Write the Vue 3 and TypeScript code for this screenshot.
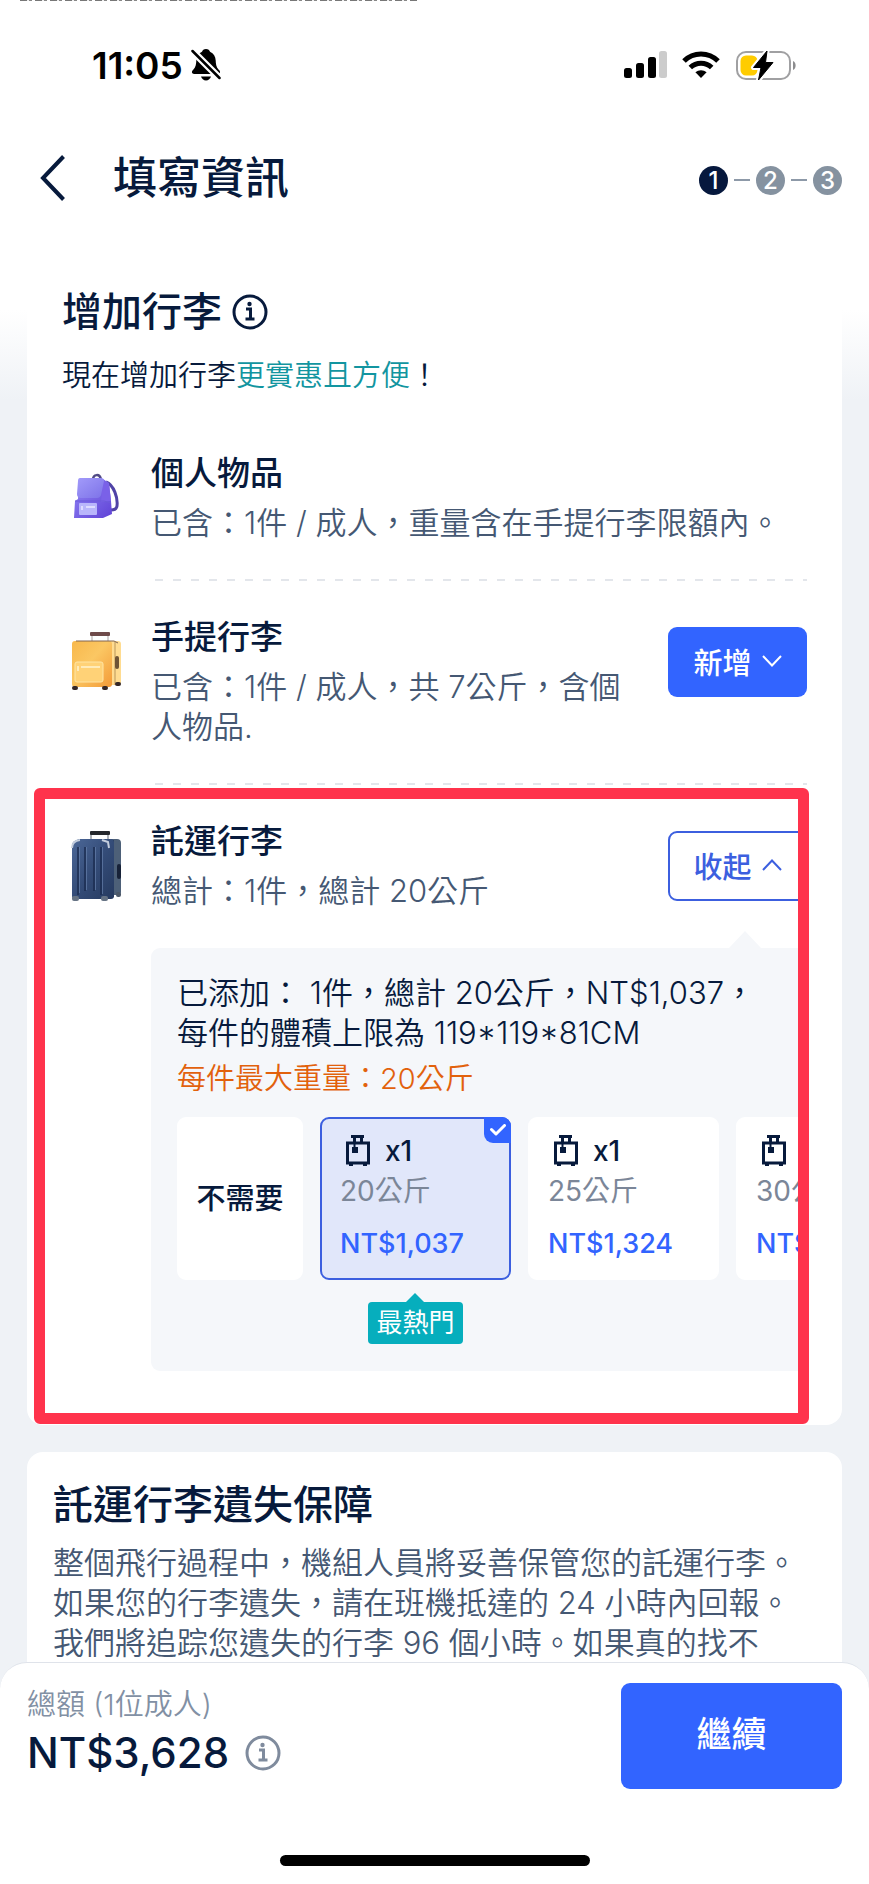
<script setup lang="ts">
import { ref } from 'vue'

interface Option {
  id: string
  weight?: string
  price?: string
  popular?: boolean
}

const options: Option[] = [
  { id: 'none' },
  { id: 'kg20', weight: '20公斤', price: 'NT$1,037', popular: true },
  { id: 'kg25', weight: '25公斤', price: 'NT$1,324' },
  { id: 'kg30', weight: '30公斤', price: 'NT$1,610' },
]

const selected = ref('kg20')
const steps = [1, 2, 3]
</script>

<template>
  <div class="page" lang="zh-Hant">
    <div class="caption-edge" aria-hidden="true"></div>
    <div class="status">
      <div class="status-left">
        <span class="time">11:05</span>
        <svg width="30" height="34" viewBox="0 0 30 34" aria-hidden="true">
          <path d="M15 1c-2.200 0-3.600 1.200-4 2.700C7.300 5.200 5.500 8.500 5.300 12.500 5.100 18 4 20 1.700 22.300c-1.500 1.700-.6 3.700 1.300 3.700h24c1.900 0 2.800-2 1.300-3.700C26 20 24.900 18 24.700 12.500 24.500 8.500 22.700 5.200 19 3.700 18.600 2.200 17.200 1 15 1Z" />
          <path d="M10 28.500h10c-.6 2.300-2.600 4-5 4s-4.400-1.700-5-4Z" />
          <path d="M1.500 3l27 27" stroke="#fff" stroke-width="7" />
          <path d="M1.500 3l27 27" stroke="#000" stroke-width="2.500" stroke-linecap="round" />
        </svg>
      </div>
      <div class="status-right">
        <svg width="43" height="28" viewBox="0 0 43 28" aria-hidden="true">
          <rect x="0" y="17" width="8" height="10" rx="2.500" />
          <rect x="12" y="12" width="8" height="15" rx="2.500" />
          <rect x="24" y="6" width="8" height="21" rx="2.500" />
          <rect x="35" y="0" width="8" height="27" rx="2.500" fill="#ccc" />
        </svg>
        <svg width="38" height="28" viewBox="0 0 38 28" aria-hidden="true">
          <g fill="none" stroke="#000" stroke-width="5">
            <path d="M2 10C11.500 .6 26.500 .6 36 10" />
            <path d="M8.300 16.500c6-5.800 15.400-5.800 21.400 0" />
          </g>
          <path d="M13.400 21.300c3.200-2.900 8-2.900 11.200 0L19 27Z" />
        </svg>
        <svg width="62" height="32" viewBox="0 0 62 32" aria-hidden="true">
          <rect x="2" y="3" width="53" height="27" rx="9" fill="none" stroke="#a0a0a2" stroke-width="2" />
          <path d="M58 12c3.500 1 3.500 8 0 9Z" fill="#8c8c8e" />
          <rect x="5.500" y="6.500" width="17" height="20" rx="5.500" fill="#ffcc00" />
          <path d="M32 2 18.500 18.500h7.500L23.500 31 38 13.500h-7.500Z" stroke="#fff" stroke-width="5" stroke-linejoin="round" />
          <path d="M32 2 18.500 18.500h7.500L23.500 31 38 13.500h-7.500Z" stroke="#000" stroke-linejoin="round" />
        </svg>
      </div>
    </div>

    <header class="header">
      <button class="back" type="button" aria-label="返回">
        <svg width="26" height="46" viewBox="0 0 26 46"><path d="M23.500 1.500 3 23l20.500 21.500" fill="none" stroke="#071a3c" stroke-width="4" /></svg>
      </button>
      <h1>填寫資訊</h1>
      <ol class="steps">
        <li v-for="s in steps" :key="s" :class="{ current: s === 1 }"><span>{{ s }}</span></li>
      </ol>
    </header>

    <main class="content">
      <section class="card baggage">
        <div class="heading">
          <h2>增加行李</h2>
          <button class="info" type="button" aria-label="行李說明">
            <svg width="36" height="36" viewBox="0 0 36 36" fill="none" stroke="currentColor" stroke-width="3">
              <circle cx="18" cy="18" r="16" />
              <path d="M14 15h4.500v9.500M13.500 25h9" />
              <circle cx="17.500" cy="10" r="2.200" fill="currentColor" stroke="none" />
            </svg>
          </button>
        </div>
        <p class="lead">現在增加行李<span>更實惠且方便</span>！</p>

        <div class="item">
          <svg class="pic" viewBox="0 0 72 90" aria-hidden="true">
            <defs>
              <linearGradient id="bagFlap" x1="0" y1="0" x2="1" y2="1"><stop stop-color="#a29bfa" /><stop offset="1" stop-color="#7d72e8" /></linearGradient>
              <linearGradient id="bagBody" x1="0" y1="0" x2="1" y2="1"><stop stop-color="#9187f6" /><stop offset="1" stop-color="#6042d6" /></linearGradient>
            </defs>
            <path d="M31 30c0-6 7-7 8 0" fill="none" stroke="#514a85" stroke-width="2.500" />
            <path d="M44 32c8 3 12 16 11 24-.5 4-4 4-6 4" fill="none" stroke="#5043a6" stroke-width="3" />
            <path d="M17 29h24l6 4 2 18 1 13-9 4H12l1-17 3-2Z" fill="url(#bagBody)" />
            <path d="m41 30 6 4 2 17-10 1Z" fill="#7a61e8" />
            <path d="M18 28h21q3 0 3 3l-3 14q-1 3-4 3H19q-4 0-4-4l1-13q0-3 2-3Z" fill="url(#bagFlap)" />
            <path d="M13 51h29l7 2" fill="none" stroke="#6c5ad9" />
            <rect x="17" y="53" width="18" height="12" rx="1" fill="#b9b6fb" />
            <path d="M20 56v4M24 57h9" stroke="#dedcff" stroke-width="2" />
          </svg>
          <div class="text">
            <h3>個人物品</h3>
            <p>已含：1件 / 成人，重量含在手提行李限額內。</p>
          </div>
        </div>

        <div class="item">
          <svg class="pic" viewBox="0 0 72 90" aria-hidden="true">
            <defs>
              <linearGradient id="carry" x1="0" y1="0" x2="1" y2="1"><stop stop-color="#f8b84c" /><stop offset=".45" stop-color="#fbc763" /><stop offset="1" stop-color="#f39a38" /></linearGradient>
            </defs>
            <path d="M30 21v8M46 21v8" stroke="#c9c4c4" stroke-width="1.500" />
            <rect x="28" y="18" width="20" height="4" rx="1" fill="#6f4b4a" />
            <path d="M43 27h13q3 0 3 3v38q0 3-3 3H43Z" fill="#ffdc91" />
            <path d="M53 28v43" stroke="#b9965a" />
            <rect x="10" y="27" width="40" height="46" rx="3" fill="url(#carry)" />
            <path d="M14 27h38l4 2" fill="none" stroke="#806451" />
            <rect x="13" y="48" width="28" height="20" rx="2" fill="#ffd277" stroke="#ffe5a5" />
            <path d="M16 52v5M19 53h19" stroke="#ffebb9" stroke-width="2" />
            <rect x="53" y="42" width="4" height="13" rx="2" fill="#6e5336" />
            <rect x="10" y="72" width="6" height="4" rx="2" fill="#342728" />
            <rect x="40" y="72" width="6" height="4" rx="2" fill="#342728" />
            <rect x="53" y="68" width="6" height="4" rx="2" fill="#342728" />
          </svg>
          <div class="text">
            <h3>手提行李</h3>
            <p>已含：1件 / 成人，共 7公斤，含個人物品.</p>
          </div>
          <button class="toggle filled" type="button">
            新增
            <svg width="20" height="12" viewBox="0 0 20 12"><path d="m1 1 9 9.500L19 1" /></svg>
          </button>
        </div>

        <div class="item checked">
          <svg class="pic" viewBox="0 0 72 90" aria-hidden="true">
            <defs>
              <linearGradient id="hold" x1="0" y1="0" x2="1" y2="1"><stop stop-color="#4c6898" /><stop offset=".5" stop-color="#344c78" /><stop offset="1" stop-color="#263a5f" /></linearGradient>
            </defs>
            <path d="M29 16v8M46 16v8" stroke="#aeb2b9" stroke-width="2" />
            <rect x="28" y="13" width="20" height="4" rx="1" fill="#25272c" />
            <path d="M42 21h13q4 0 4 4v49q0 3-4 3H43Z" fill="#4d6078" />
            <path d="M51 22v57" stroke="#273952" stroke-width="2" />
            <path d="M17 21h32q3 0 3 4v53q0 3-3 3H13q-3 0-3-3V27q0-4 7-6Z" fill="url(#hold)" />
            <path d="M10 30q0-7 8-8M40 22l6 2 1 6" fill="none" stroke="#c3cddd" stroke-width="2" />
            <path d="M16 29v48M23 29v44M32 29v44M39 29v48" stroke="#1b2d50" stroke-width="1.500" />
            <path d="M17.500 29v46M24.500 29v43M33.500 29v43M40.500 29v47" stroke="#6580aa" stroke-width=".7" />
            <rect x="55" y="46" width="4" height="15" rx="2" fill="#172238" />
            <rect x="10" y="78" width="7" height="5" rx="2" fill="#667384" />
            <rect x="39" y="78" width="7" height="5" rx="2" fill="#667384" />
            <rect x="54" y="74" width="5" height="5" rx="2" fill="#4c5868" />
          </svg>
          <div class="text">
            <h3>託運行李</h3>
            <p>總計：1件，總計 20公斤</p>
          </div>
          <button class="toggle outlined" type="button">
            收起
            <svg width="20" height="12" viewBox="0 0 20 12"><path d="m1 11 9-9.500L19 11" /></svg>
          </button>

          <div class="panel">
            <p class="added">已添加： 1件，總計 20公斤，NT$1,037，<br />每件的體積上限為 119*119*81CM</p>
            <p class="limit">每件最大重量：20公斤</p>
            <div class="options" role="radiogroup" aria-label="託運行李">
              <div v-for="o in options" :key="o.id" class="slot" :class="{ narrow: !o.weight }">
                <label class="option" :class="{ on: selected === o.id }">
                  <input v-model="selected" type="radio" name="checked-bag" :value="o.id" />
                  <template v-if="o.weight">
                    <span class="count">
                      <svg width="26" height="32" viewBox="0 0 26 32" aria-hidden="true">
                        <path d="M2.500 8h21v20h-21ZM6 1.500h13M9.500 2v6M16.500 2v6" fill="none" stroke="#071a3c" stroke-width="3" />
                        <path d="M9.500 8v5" stroke="#071a3c" stroke-width="2" />
                        <path d="M7 12h6v6H7ZM4 28h4v3H4ZM18 28h4v3h-4Z" fill="#071a3c" />
                      </svg>
                      x1
                    </span>
                    <span class="weight">{{ o.weight }}</span>
                    <span class="price">{{ o.price }}</span>
                  </template>
                  <span v-else class="none">不需要</span>
                  <span v-if="selected === o.id" class="tick">
                    <svg width="16" height="12" viewBox="0 0 16 12"><path d="m1.500 5.500 4.500 4.500 8.500-8.500" fill="none" stroke="#fff" stroke-width="3" stroke-linecap="round" stroke-linejoin="round" /></svg>
                  </span>
                </label>
                <span v-if="o.popular" class="tag">最熱門</span>
              </div>
            </div>
          </div>
          <div class="highlight" aria-hidden="true"></div>
        </div>
      </section>

      <section class="card cover">
        <h2>託運行李遺失保障</h2>
        <p>整個飛行過程中，機組人員將妥善保管您的託運行李。<br />如果您的行李遺失，請在班機抵達的 24 小時內回報。<br />我們將追踪您遺失的行李 96 個小時。如果真的找不</p>
      </section>
    </main>

    <footer class="footer">
      <div class="pay">
        <div class="total">
          <span class="total-label">總額 (1位成人)</span>
          <div class="amount">
            <strong>NT$3,628</strong>
            <button class="info muted" type="button" aria-label="價格明細">
              <svg width="36" height="36" viewBox="0 0 36 36" fill="none" stroke="currentColor" stroke-width="3">
                <circle cx="18" cy="18" r="16" />
                <path d="M14 15h4.500v9.500M13.500 25h9" />
                <circle cx="17.500" cy="10" r="2.200" fill="currentColor" stroke="none" />
              </svg>
            </button>
          </div>
        </div>
        <button class="continue" type="button">繼續</button>
      </div>
      <div class="home-bar"></div>
    </footer>
  </div>
</template>

<style>
body {
  margin: 0;
}
</style>

<style scoped>
.page {
  display: flex;
  flex-direction: column;
  height: 100vh;
  overflow: hidden;
  position: relative;
  background: linear-gradient(#fff 310px, #eff2f6 400px);
  color: #071a3c;
  font-family: Inter, "Noto Sans CJK TC", sans-serif;
}
h1, h2, h3, p, ol {
  margin: 0;
  padding: 0;
  font-weight: 500;
}
p {
  font-weight: 350;
}
button {
  font: inherit;
  color: inherit;
  border: 0;
  padding: 0;
  background: none;
}
svg {
  display: block;
  flex: none;
}
.caption-edge {
  position: absolute;
  top: 0;
  left: 20px;
  width: 397px;
  height: 1px;
  background: repeating-linear-gradient(90deg, #777 0 7px, #eee 7px 9px, #888 9px 12px, #fff 12px 15px);
}
.status {
  flex: none;
  display: flex;
  align-items: center;
  justify-content: space-between;
  height: 130px;
  padding: 0 72px 0 92px;
}
.status-left, .status-right {
  display: flex;
  align-items: center;
}
.status-left {
  gap: 8px;
}
.status-right {
  gap: 15px;
}
.time {
  color: #000;
  font-size: 37px;
  font-weight: 600;
}
.header {
  flex: none;
  display: flex;
  align-items: center;
  height: 96px;
  padding: 0 27px 0 40px;
}
.header h1 {
  flex: 1;
  margin-left: 47px;
  font-size: 44px;
  line-height: 60px;
}
.steps {
  display: flex;
  list-style: none;
  padding-top: 4px;
}
.steps li {
  display: flex;
  align-items: center;
}
.steps li span {
  width: 29px;
  height: 29px;
  border-radius: 50%;
  background: #8592a0;
  color: #fff;
  font-size: 24px;
  font-weight: 500;
  line-height: 29px;
  text-align: center;
}
.steps li.current span {
  background: #06183d;
}
.steps li + li::before {
  content: "";
  width: 16px;
  height: 2px;
  margin: 0 6px;
  background: #8d99a8;
}
.content {
  flex: 1;
  min-height: 0;
  overflow: hidden;
  padding: 0 27px;
}
.card {
  background: #fff;
  border-radius: 16px;
}
.card h2 {
  font-size: 40px;
  line-height: 60px;
}
.baggage {
  padding: 56px 35px 54px;
}
.heading {
  display: flex;
  align-items: center;
  gap: 10px;
}
.info.muted {
  color: #7f8b9d;
}
.lead {
  margin: 14px 0 21px;
  font-size: 29px;
  line-height: 40px;
}
.lead span {
  color: #1295a0;
}
.item {
  position: relative;
  display: grid;
  grid-template-columns: 72px minmax(0, 1fr) auto;
  column-gap: 17px;
  padding: 33px 0 38px;
}
.item:not(.checked) {
  background: repeating-linear-gradient(90deg, #e3e6eb 0 8px, transparent 8px 18px) 100% 100% / 652px 2px no-repeat;
}
.pic {
  width: 72px;
  height: 90px;
}
.item h3 {
  margin-bottom: 7px;
  font-size: 33px;
  line-height: 46px;
}
.item .text p {
  color: #455873;
  font-size: 31px;
  line-height: 40px;
}
.toggle {
  display: flex;
  align-items: center;
  justify-content: center;
  gap: 10px;
  box-sizing: border-box;
  width: 139px;
  height: 70px;
  margin-top: 13px;
  padding-bottom: 3px;
  border-radius: 9px;
  font-size: 29px;
  font-weight: 500;
}
.toggle svg {
  fill: none;
  stroke: currentColor;
  stroke-width: 2;
}
.filled {
  background: #3264ff;
  color: #fff;
}
.outlined {
  border: 2px solid #3c5fdf;
  color: #3c5fdf;
}
.item.checked {
  padding-bottom: 0;
}
.panel {
  position: relative;
  grid-column: 1 / -1;
  min-width: 0;
  margin: 37px 0 0 89px;
  padding: 25px 0 27px 26px;
  border-radius: 9px;
  background: #f5f7fa;
}
.panel::before {
  content: "";
  position: absolute;
  right: 46px;
  bottom: 100%;
  border: 16px solid transparent;
  border-top: 0;
  border-bottom: 17px solid #f5f7fa;
}
.added {
  font-size: 31px;
  line-height: 40px;
}
.limit {
  margin: 6px 0 18px;
  color: #e2610c;
  font-size: 29px;
  line-height: 40px;
}
.options {
  display: flex;
  gap: 17px;
  overflow: hidden;
}
.slot {
  flex: none;
  display: flex;
  flex-direction: column;
  align-items: center;
  width: 191px;
}
.slot.narrow {
  width: 126px;
}
.option {
  position: relative;
  display: flex;
  flex-direction: column;
  box-sizing: border-box;
  width: 100%;
  height: 163px;
  padding: 12px 0 0 18px;
  border: 2px solid #fff;
  border-radius: 9px;
  background: #fff;
  font-size: 28px;
  line-height: 40px;
}
.option.on {
  border-color: #3c5fdf;
  background: #e1e7fa;
}
.option input {
  position: absolute;
  opacity: 0;
}
.narrow .option {
  align-items: center;
  justify-content: center;
  padding: 0;
}
.none {
  font-size: 29px;
  font-weight: 500;
}
.count {
  display: flex;
  align-items: center;
  gap: 14px;
  padding-left: 5px;
  font-weight: 500;
}
.weight {
  color: #7b8698;
}
.price {
  margin-top: 13px;
  color: #3264ff;
  font-size: 27px;
  font-weight: 500;
}
.tick {
  position: absolute;
  top: -2px;
  right: -2px;
  display: flex;
  align-items: center;
  justify-content: center;
  width: 27px;
  height: 26px;
  border-radius: 0 9px;
  background: #3264ff;
}
.tag {
  position: relative;
  margin-top: 22px;
  padding: 0 8px;
  border-radius: 4px;
  background: #06aebd;
  color: #fff;
  font-size: 26px;
  line-height: 42px;
}
.tag::before {
  content: "";
  position: absolute;
  left: calc(50% - 9px);
  bottom: 100%;
  border: 9px solid transparent;
  border-top: 0;
  border-bottom-color: #06aebd;
}
.highlight {
  position: absolute;
  inset: 3px -2px -53px -28px;
  border: 11px solid #ff334c;
  border-radius: 6px;
  pointer-events: none;
}
.cover {
  margin-top: 27px;
  padding: 23px 26px;
}
.cover p {
  margin-top: 8px;
  color: #455873;
  font-size: 31px;
  line-height: 40px;
}
.footer {
  flex: none;
  box-sizing: border-box;
  padding: 20px 27px 18px;
  border-top: 1px solid #dfe3ea;
  border-radius: 27px 27px 0 0;
  background: #fff;
}
.pay {
  display: flex;
  justify-content: space-between;
}
.total-label {
  display: block;
  padding-top: 2px;
  color: #8290a4;
  font-size: 29px;
  font-weight: 350;
  line-height: 40px;
}
.amount {
  display: flex;
  align-items: center;
  gap: 16px;
}
.amount strong {
  font-size: 42px;
  font-weight: 500;
  line-height: 56px;
}
.continue {
  width: 221px;
  height: 106px;
  padding-bottom: 10px;
  border-radius: 9px;
  background: #3264ff;
  color: #fff;
  font-size: 35px;
  font-weight: 500;
}
.home-bar {
  width: 310px;
  height: 11px;
  margin: 66px auto 0;
  border-radius: 6px;
  background: #000;
}
</style>
